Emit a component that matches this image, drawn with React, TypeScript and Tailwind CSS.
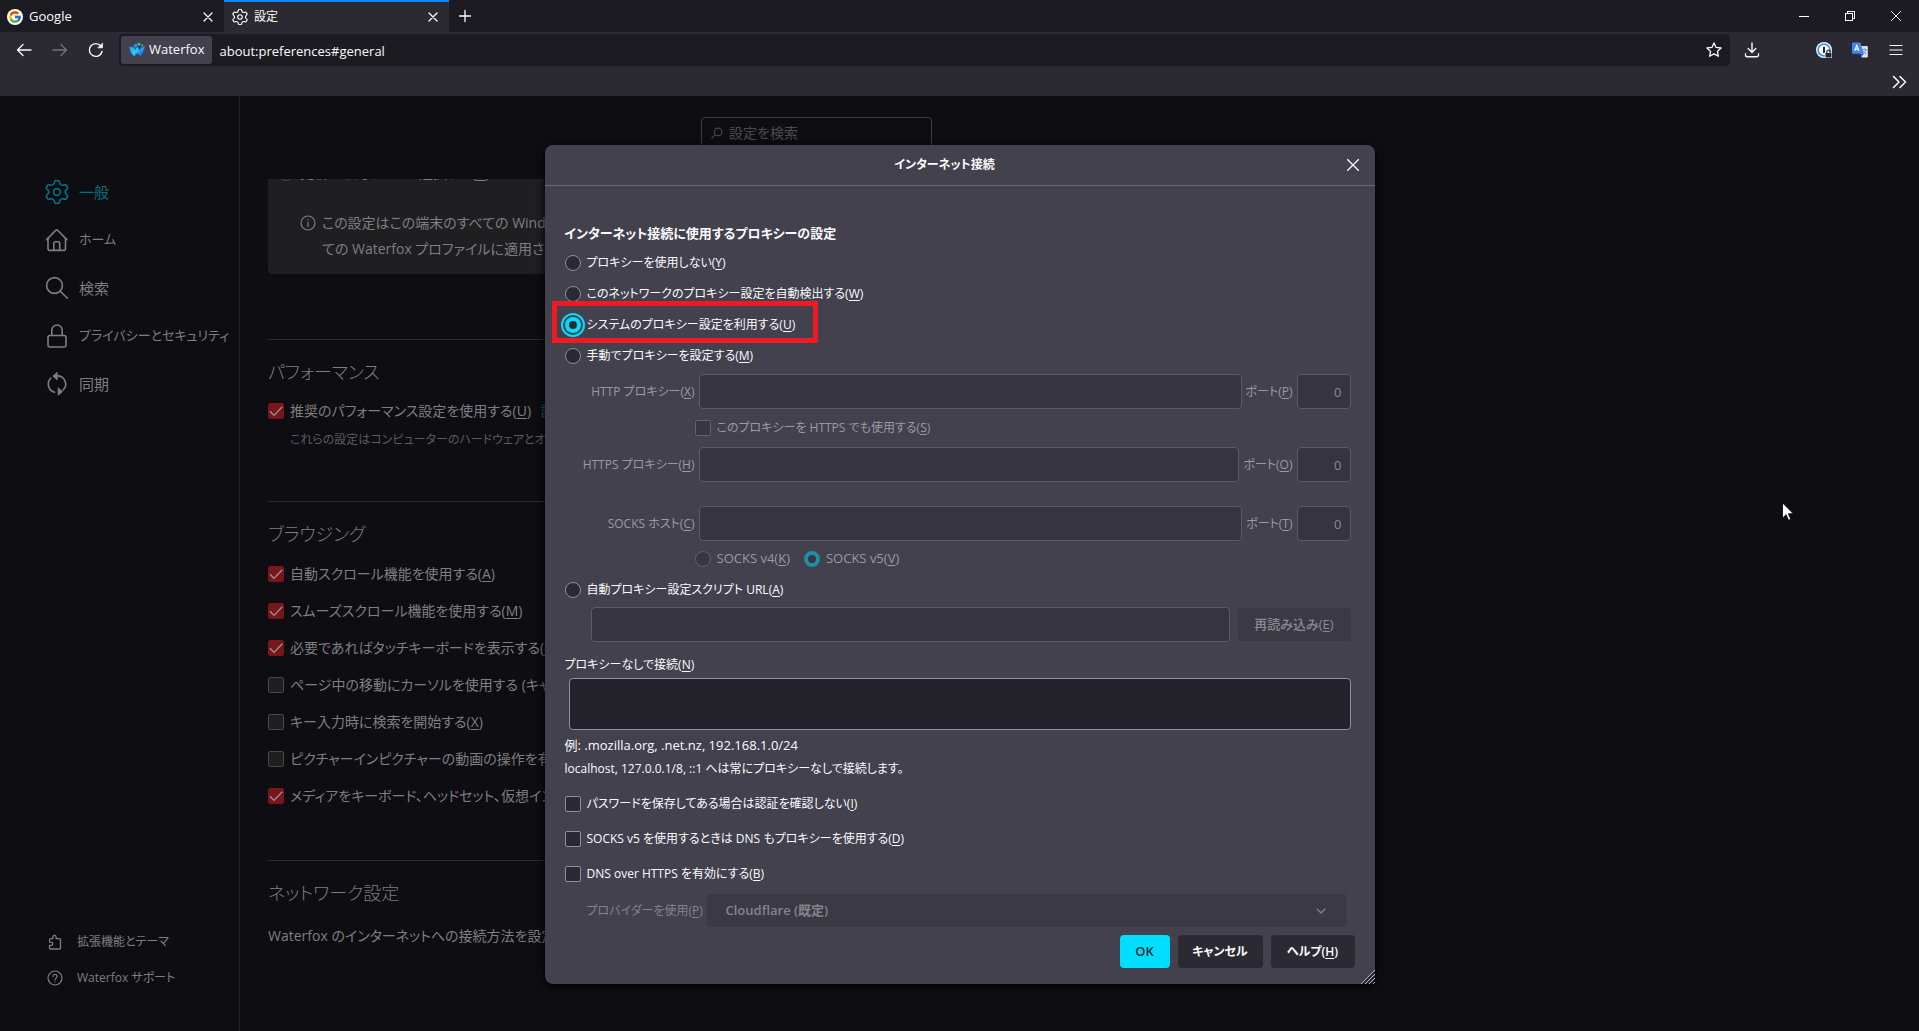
import React, { useState } from "react";
import { FcGoogle } from "react-icons/fc";

/* ---------- icons ---------- */

const polar = (r: number, deg: number) => {
  const a = (deg * Math.PI) / 180;
  return `${(12 + r * Math.cos(a)).toFixed(2)} ${(12 + r * Math.sin(a)).toFixed(2)}`;
};

const gearPath =
  Array.from({ length: 6 }, (_, k) => {
    const c = k * 60 - 90;
    return `${k === 0 ? "M" : "L"}${polar(9.4, c - 17)} Q${polar(12.9, c - 9)} ${polar(11.2, c)} Q${polar(12.9, c + 9)} ${polar(9.4, c + 17)} Q${polar(7.2, c + 30)} ${polar(9.4, c + 43)}`;
  }).join(" ") + "Z";

function Gear({ className = "", width = 1.8 }: { className?: string; width?: number }) {
  return (
    <svg viewBox="0 0 24 24" className={`shrink-0 ${className}`} fill="none" stroke="currentColor" strokeWidth={width} strokeLinejoin="round" aria-hidden="true">
      <path d={gearPath} />
      <circle cx="12" cy="12" r="3.4" />
    </svg>
  );
}

function Icon({ className = "", box = 24, width = 1.6, children }: { className?: string; box?: number; width?: number; children: React.ReactNode }) {
  return (
    <svg viewBox={`0 0 ${box} ${box}`} className={`shrink-0 ${className}`} fill="none" stroke="currentColor" strokeWidth={width} strokeLinecap="round" strokeLinejoin="round" aria-hidden="true">
      {children}
    </svg>
  );
}

const CloseIcon = ({ className = "size-4" }: { className?: string }) => (
  <Icon box={16} width={1.3} className={className}>
    <path d="M4 4l8 8M12 4l-8 8" />
  </Icon>
);

const HomeIcon = () => (
  <Icon className="size-6">
    <path d="M1.6 11.6 10.8 2.3a1.3 1.3 0 0 1 1.8 0l9.2 9.3" />
    <path d="M3 10.400v10a2 2 0 0 0 2 2h13.500a2 2 0 0 0 2-2v-10" />
    <path d="M8.800 22.400v-7.200a1.500 1.500 0 0 1 1.500-1.500h2.900a1.500 1.500 0 0 1 1.500 1.500v7.200" />
  </Icon>
);

const SearchIcon = () => (
  <Icon className="size-6">
    <circle cx="9.500" cy="9.500" r="7.900" />
    <path d="M15.200 15.200l7.200 7" />
  </Icon>
);

const LockIcon = () => (
  <Icon className="size-6">
    <rect x="3" y="11.500" width="18" height="11.500" rx="2" />
    <path d="M6.800 11.500V6.200a5.200 5.200 0 0 1 10.400 0v5.300" />
  </Icon>
);

const SyncIcon = () => (
  <Icon className="size-6">
    <path d="M9.500 20.200a8.300 8.300 0 0 1-3.600-14" />
    <path d="M13 3.900a8.200 8.200 0 0 1 5.200 14" />
    <path d="M12.200.8v7L8.200 4.300zM13.200 16.200v7l4-3.500z" fill="currentColor" strokeWidth="1" />
  </Icon>
);

const PuzzleIcon = () => (
  <Icon box={16} width={1.3} className="size-4">
    <path d="M2.500 6.800V5.600a1 1 0 0 1 1-1h2.400V2.900a1.600 1.600 0 0 1 3.200 0v1.700h3.400a1 1 0 0 1 1 1v8.400a1 1 0 0 1-1 1h-9a1 1 0 0 1-1-1v-2.600h1.700a1.600 1.600 0 0 0 0-3.200H2.500" />
  </Icon>
);

const HelpIcon = () => (
  <Icon box={16} width={1.2} className="size-4">
    <circle cx="8" cy="8" r="7" />
    <path d="M6 6.500a2 2 0 1 1 3 1.700c-.7.400-1 .7-1 1.500M8 11.800v.1" />
  </Icon>
);

const InfoIcon = () => (
  <Icon box={16} width={1.2} className="size-4">
    <circle cx="8" cy="8" r="7" />
    <path d="M8 7.200v4.300M8 4.600v.2" />
  </Icon>
);

const WaterfoxLogo = () => (
  <svg viewBox="0 0 16 16" className="size-4" aria-hidden="true">
    <defs>
      <linearGradient id="wf" x1="0" y1="0" x2="1" y2="0.600">
        <stop offset="0" stopColor="#2a8df0" />
        <stop offset="0.500" stopColor="#22d3fa" />
        <stop offset="1" stopColor="#2a55e8" />
      </linearGradient>
    </defs>
    <path d="M.2 4.400 4.600 5.600l1.700 2.600L8.200 4.600l2.200 3.600 1.800-2.400 3.600-1.600-1.400 5.800-2.800 4.600L8 11.200l-3 3.400L1.600 10z" fill="url(#wf)" />
    <path d="M3.600 3.800 7.600 1.600 8.400 4.200l-2.200 3z" fill="#1b7fd8" />
    <path d="M8.600 1h2.600v2.400H8.600zM6 2h1.600v1.400H6zM12.400 2.600h1.800v1.600h-1.800z" fill="#2fc4c8" />
  </svg>
);

const PasswordIcon = () => (
  <svg viewBox="0 0 16 16" className="size-4" aria-hidden="true">
    <circle cx="8" cy="8" r="8" fill="#f4f6f8" />
    <circle cx="8" cy="8" r="5.900" fill="#fff" stroke="#3d9af0" strokeWidth="1.800" />
    <rect x="7" y="4.800" width="2" height="6.200" rx=".6" fill="#23262b" />
    <path d="M8.800 10h7.200v6H8.800z" fill="#f4f6f8" />
    <rect x="9.500" y="11" width="6" height="4.500" rx=".6" fill="#23262b" />
    <path d="M10.800 11V9.700a1.700 1.700 0 0 1 3.400 0V11" fill="none" stroke="#23262b" strokeWidth="1.200" />
  </svg>
);

const TranslateIcon = () => (
  <svg viewBox="0 0 16 16" className="size-4" aria-hidden="true">
    <path d="M7.500 4H15a.8.8 0 0 1 .8.8v10a.8.8 0 0 1-.8.8H9.500z" fill="#dfe1e5" />
    <path d="M10.300 7.500h4.500M12.500 6.600v.9M14 7.500c-.3 2-1.600 3.500-3 4.500M11.200 8.800c.6 1.500 1.800 2.600 3 3.200" stroke="#5b8def" strokeWidth=".9" fill="none" />
    <path d="M.8.600h7.600l3.400 11.200H.8a.8.800 0 0 1-.8-.8V1.400A.8.800 0 0 1 .8.600z" fill="#4583ee" />
    <path d="M8 11.800h3.800L9 15.200z" fill="#2a56c6" />
    <path d="M2.600 8.900 4.800 3.400 7 8.900M3.400 7.200h2.900" stroke="#fff" strokeWidth="1.200" fill="none" />
  </svg>
);

/* ---------- small parts ---------- */

const Key = ({ children }: { children: string }) => (
  <>
    (<span className="underline underline-offset-2">{children}</span>)
  </>
);

function ToolButton({ label, children, className = "" }: { label: string; children: React.ReactNode; className?: string }) {
  return (
    <button type="button" aria-label={label} className={`grid h-8 w-9 place-items-center ${className}`}>
      {children}
    </button>
  );
}

function PageCheck({ id, checked = false, children }: { id: string; checked?: boolean; children: React.ReactNode }) {
  return (
    <div className="flex h-[37px] items-center gap-1.5 whitespace-nowrap text-sm">
      <span className="grid size-4 shrink-0 place-items-center">
        <input
          id={id}
          type="checkbox"
          defaultChecked={checked}
          className="peer col-start-1 row-start-1 size-4 appearance-none rounded-xs border border-[#49494b] bg-[#1f1f1f] checked:border-[#77171c] checked:bg-[#77171c]"
        />
        <svg viewBox="0 0 16 16" className="pointer-events-none invisible col-start-1 row-start-1 size-4 peer-checked:visible" fill="none" stroke="#9d9598" strokeWidth="1.300" aria-hidden="true">
          <path d="M2 8.200l4 4.200 8.300-8.600" />
        </svg>
      </span>
      <label htmlFor={id}>{children}</label>
    </div>
  );
}

function DialogCheck({ id, disabled = false, children }: { id: string; disabled?: boolean; children: React.ReactNode }) {
  return (
    <div className="flex items-center gap-1.5">
      <input
        id={id}
        type="checkbox"
        disabled={disabled}
        className="size-4 shrink-0 appearance-none rounded-xs border border-[#8f8f9d] bg-[#2b2a33] checked:bg-[#00ddff] disabled:border-[#62616c] disabled:bg-[#383641]"
      />
      <label htmlFor={id} className={disabled ? "text-[#9b9aa2]" : ""}>
        {children}
      </label>
    </div>
  );
}

function Radio({ id, name, checked, onSelect, children }: { id: string; name: string; checked: boolean; onSelect: () => void; children: React.ReactNode }) {
  return (
    <div className="flex h-[31px] items-center gap-1.5">
      <input
        id={id}
        name={name}
        type="radio"
        checked={checked}
        onChange={onSelect}
        className="size-4 shrink-0 appearance-none rounded-full border border-[#8f8f9d] bg-[#2b2a33] checked:border-4 checked:border-[#00ddff] checked:outline-2 checked:outline-offset-2 checked:outline-[#00ddff]"
      />
      <label htmlFor={id}>{children}</label>
    </div>
  );
}

function SocksRadio({ id, checked = false, children }: { id: string; checked?: boolean; children: React.ReactNode }) {
  return (
    <div className="flex items-center gap-1.5">
      <input
        id={id}
        name="socks-version"
        type="radio"
        defaultChecked={checked}
        disabled
        className="size-4 appearance-none rounded-full border border-[#5f5e6a] bg-[#383641] checked:border-4 checked:border-[#218ea6]"
      />
      <label htmlFor={id}>{children}</label>
    </div>
  );
}

const fieldClass = "h-[35px] rounded border border-[#5b5a66] bg-[#36343f] px-2 text-[13px] text-[#8b8a93]";

function ProxyRow({ id, label, hotkey, portKey }: { id: string; label: string; hotkey: string; portKey: string }) {
  return (
    <div className="flex items-center gap-1 pr-1 whitespace-nowrap text-[#9b9aa2]">
      <label htmlFor={id} className="w-[130px] text-right">
        {label}
        <Key>{hotkey}</Key>
      </label>
      <input id={id} type="text" disabled className={`min-w-0 flex-1 ${fieldClass}`} />
      <label htmlFor={`${id}-port`}>
        ポート<Key>{portKey}</Key>
      </label>
      <input id={`${id}-port`} type="text" disabled defaultValue="0" className={`w-[54px] text-right ${fieldClass}`} />
    </div>
  );
}

/* ---------- browser chrome ---------- */

function BrowserChrome() {
  return (
    <header className="shrink-0 bg-[#2b2a33] text-[13px] text-[#fbfbfe]">
      <div className="flex h-8 bg-[#1c1b22]">
        <div className="flex w-56 items-center gap-1.5 border-t-2 border-transparent pr-2 pl-[7px]">
          <span className="grid size-4 place-items-center rounded-full bg-white">
            <FcGoogle className="size-3.5" />
          </span>
          <span className="flex-1">Google</span>
          <button type="button" aria-label="Google タブを閉じる">
            <CloseIcon />
          </button>
        </div>
        <div className="flex w-[225px] items-center gap-1.5 border-t-2 border-[#0a84ff] bg-[#2b2a33] px-2">
          <Gear className="size-4" width={1.7} />
          <span className="flex-1 text-xs">設定</span>
          <button type="button" aria-label="設定タブを閉じる">
            <CloseIcon />
          </button>
        </div>
        <button type="button" aria-label="新しいタブ" className="grid w-8 place-items-center">
          <Icon box={16} width={1.3} className="size-4">
            <path d="M8 2.500v11M2.500 8h11" />
          </Icon>
        </button>
        <div className="ml-auto flex">
          <button type="button" aria-label="最小化" className="grid w-[46px] place-items-center">
            <span className="h-px w-2.5 bg-white" />
          </button>
          <button type="button" aria-label="元に戻す" className="grid w-[46px] place-items-center">
            <svg viewBox="0 0 10 10" className="size-2.5" fill="none" stroke="currentColor" shapeRendering="crispEdges" aria-hidden="true">
              <path d="M.5 2.500h7v7h-7zM2.500 2V.5h7v7H8" />
            </svg>
          </button>
          <button type="button" aria-label="閉じる" className="grid w-[46px] place-items-center">
            <svg viewBox="0 0 10 10" className="size-2.5" stroke="currentColor" strokeWidth="1" aria-hidden="true">
              <path d="M0 0l10 10M10 0L0 10" />
            </svg>
          </button>
        </div>
      </div>

      <div className="flex items-center pt-0.5 pr-[5px] pl-1.5">
        <ToolButton label="戻る">
          <Icon box={16} width={1.3} className="size-4">
            <path d="M15 8H1.500M7 2.500 1.500 8 7 13.500" />
          </Icon>
        </ToolButton>
        <ToolButton label="進む" className="text-[#74737b]">
          <Icon box={16} width={1.3} className="size-4">
            <path d="M1 8h13.500M9 2.500 14.500 8 9 13.500" />
          </Icon>
        </ToolButton>
        <ToolButton label="再読み込み">
          <Icon box={16} width={1.4} className="size-4">
            <path d="M14 9.500A6.400 6.400 0 1 1 12.800 4" />
            <path d="M14.500 1.500v4.300h-4.300z" fill="currentColor" strokeWidth=".8" />
          </Icon>
        </ToolButton>
        <div className="ml-[5px] flex h-8 flex-1 items-center rounded bg-[#1c1b22] pl-0.5">
          <button type="button" className="flex h-7 items-center gap-1 rounded-[3px] bg-[#42414d] px-2">
            <WaterfoxLogo />
            Waterfox
          </button>
          <input aria-label="アドレス" defaultValue="about:preferences#general" className="ml-[7px] h-7 min-w-0 flex-1 bg-transparent pt-0.5 outline-none" />
          <button type="button" aria-label="ブックマークに追加" className="mr-2">
            <Icon box={16} width={1.3} className="size-4">
              <path d="M8 .9l2.100 4.500 5 .6-3.700 3.400 1 4.900L8 11.900l-4.400 2.400 1-4.900L.9 6l5-.6z" />
            </Icon>
          </button>
        </div>
        <ToolButton label="ダウンロード" className="ml-1">
          <Icon box={16} width={1.4} className="size-4">
            <path d="M8 1v9M4.200 6.600 8 10.400l3.800-3.800M1.500 11.800v1.200a1.800 1.800 0 0 0 1.800 1.800h9.400a1.800 1.800 0 0 0 1.800-1.800v-1.200" />
          </Icon>
        </ToolButton>
        <ToolButton label="パスワード管理" className="ml-9">
          <PasswordIcon />
        </ToolButton>
        <ToolButton label="翻訳">
          <TranslateIcon />
        </ToolButton>
        <ToolButton label="メニュー">
          <Icon box={16} width={1.2} className="size-4">
            <path d="M2 3.500h12M2 8h12M2 12.500h12" />
          </Icon>
        </ToolButton>
      </div>

      <div className="flex h-[30px] items-center justify-end pt-0.5 pr-3">
        <button type="button" aria-label="ブックマークをさらに表示">
          <Icon box={16} width={1.5} className="size-4">
            <path d="M2.500 2.500 8 8l-5.500 5.500M9 2.500 14.500 8 9 13.500" />
          </Icon>
        </button>
      </div>
    </header>
  );
}

/* ---------- settings page ---------- */

const categories = [
  { label: "一般", icon: <Gear className="size-6" width={1.6} />, style: "text-[15px] text-[#00727f]" },
  { label: "ホーム", icon: <HomeIcon />, style: "text-[13px]" },
  { label: "検索", icon: <SearchIcon />, style: "text-[15px]" },
  { label: "プライバシーとセキュリティ", icon: <LockIcon />, style: "text-[13px]" },
  { label: "同期", icon: <SyncIcon />, style: "text-[15px]" },
];

function Sidebar() {
  return (
    <nav className="flex w-60 shrink-0 flex-col justify-between border-r border-[#242427] pt-[72px] pb-[35px] pl-[45px] whitespace-nowrap">
      <ul>
        {categories.map((c) => (
          <li key={c.label}>
            <a href="#" className={`flex h-12 items-center gap-2.5 ${c.style}`}>
              {c.icon}
              {c.label}
            </a>
          </li>
        ))}
      </ul>
      <ul className="pl-0.5 text-xs">
        <li>
          <a href="#" className="flex h-9 items-center gap-3.5">
            <PuzzleIcon />
            拡張機能とテーマ
          </a>
        </li>
        <li>
          <a href="#" className="flex h-9 items-center gap-3.5">
            <HelpIcon />
            Waterfox サポート
          </a>
        </li>
      </ul>
    </nav>
  );
}

const browsing = [
  { text: "自動スクロール機能を使用する", hotkey: "A", checked: true },
  { text: "スムーズスクロール機能を使用する", hotkey: "M", checked: true },
  { text: "必要であればタッチキーボードを表示する", hotkey: "C", checked: true },
  { text: "ページ中の移動にカーソルを使用する (キャレット)", hotkey: "B", checked: false },
  { text: "キー入力時に検索を開始する", hotkey: "X", checked: false },
  { text: "ピクチャーインピクチャーの動画の操作を有効にする", hotkey: "E", checked: false },
  { text: "メディアをキーボード、ヘッドセット、仮想インターフェイスで操作する", hotkey: "V", checked: true },
];

const headingClass = "h-8 text-lg leading-8 font-light";

function Preferences() {
  return (
    <main className="ml-7 flex w-[664px] flex-col">
      <div className="flex h-[83px] shrink-0 justify-end pt-[21px]">
        <div className="flex h-8 w-[231px] items-center gap-1.5 rounded border border-[#3d3d41] px-[9px] text-[#4b4b4e]">
          <Icon box={16} width={1.4} className="size-3">
            <circle cx="9.500" cy="6.500" r="5" />
            <path d="M5.800 10.200 1 15" />
          </Icon>
          <input aria-label="設定を検索" placeholder="設定を検索" className="w-full bg-transparent text-sm outline-none placeholder:text-[#4b4b4e]" />
        </div>
      </div>

      <div className="min-h-0 flex-1 overflow-hidden">
        <section className="h-[95px] overflow-hidden rounded-b bg-[#1f1f21] text-sm">
          <div className="-mt-[17px] flex h-[22px] items-center gap-1.5 pl-2.5">
            <input id="update-ask" type="radio" className="size-4 appearance-none rounded-full border border-[#49494b]" />
            <label htmlFor="update-ask">
              更新を確認してから選択する<Key>C</Key>
            </label>
          </div>
          <div className="mt-[26px] flex gap-1.5 pl-8 leading-[26px]">
            <span className="flex h-[26px] items-center">
              <InfoIcon />
            </span>
            <p className="whitespace-nowrap">
              この設定はこの端末のすべての Windows アカウントと、
              <br />
              ての Waterfox プロファイルに適用されます。
            </p>
          </div>
        </section>

        <section className="mt-[65px] border-t border-[#2a2a2d] pt-4">
          <h2 className={headingClass}>パフォーマンス</h2>
          <div className="mt-1 flex items-center gap-2.5 whitespace-nowrap">
            <PageCheck id="performance" checked>
              推奨のパフォーマンス設定を使用する<Key>U</Key>
            </PageCheck>
            <a href="#" className="text-sm text-[#00727f]">
              詳細情報
            </a>
          </div>
          <p className="h-[22px] pl-[22px] text-xs leading-[22px] whitespace-nowrap text-[#5c5b60]">
            これらの設定はコンピューターのハードウェアとオペレーティングシステムに最適化されます。
          </p>
        </section>

        <section className="mt-[50px] border-t border-[#2a2a2d] pt-4">
          <h2 className={headingClass}>ブラウジング</h2>
          <div className="mt-[5px]">
            {browsing.map((b) => (
              <PageCheck key={b.hotkey} id={`browse-${b.hotkey}`} checked={b.checked}>
                {b.text}
                <Key>{b.hotkey}</Key>
              </PageCheck>
            ))}
          </div>
        </section>

        <section className="mt-[46px] border-t border-[#2a2a2d] pt-4">
          <h2 className={headingClass}>ネットワーク設定</h2>
          <p className="mt-3.5 text-sm leading-[26px]">Waterfox のインターネットへの接続方法を設定します。</p>
        </section>
      </div>
    </main>
  );
}

/* ---------- connection dialog ---------- */

function ConnectionDialog() {
  const [mode, setMode] = useState("system");
  const radio = (value: string, text: string, hotkey: string) => (
    <Radio id={`proxy-${value}`} name="proxy-mode" checked={mode === value} onSelect={() => setMode(value)}>
      {text}
      <Key>{hotkey}</Key>
    </Radio>
  );

  return (
    <div role="dialog" aria-labelledby="dialog-title" className="relative w-[830px] rounded-lg bg-[#42414d] text-xs text-[#fbfbfe] shadow-[0_2px_8px_#000]">
      <div className="flex h-[41px] items-center border-b border-[#686773] pr-3.5">
        <h1 id="dialog-title" className="flex-1 text-center font-bold">
          インターネット接続
        </h1>
        <button type="button" aria-label="閉じる" className="grid w-4 place-items-center">
          <svg viewBox="0 0 12 12" className="size-3" stroke="currentColor" strokeWidth="1.300" aria-hidden="true">
            <path d="M0 0l12 12M12 0L0 12" />
          </svg>
        </button>
      </div>

      <form className="px-5 pt-[35px] pb-4" onSubmit={(e) => e.preventDefault()}>
        <h2 className="h-[26px] text-[13px] leading-6 font-bold">インターネット接続に使用するプロキシーの設定</h2>
        {radio("none", "プロキシーを使用しない", "Y")}
        {radio("detect", "このネットワークのプロキシー設定を自動検出する", "W")}
        <div className="relative">
          {radio("system", "システムのプロキシー設定を利用する", "U")}
          <div className="pointer-events-none absolute -top-2 -left-[13px] h-[42px] w-[266px] border-[5px] border-[#ed1c24]" />
        </div>
        {radio("manual", "手動でプロキシーを設定する", "M")}

        <div className="mt-[3px]">
          <ProxyRow id="http" label="HTTP プロキシー" hotkey="X" portKey="P" />
          <div className="flex h-[38px] items-center pl-[130px]">
            <DialogCheck id="share" disabled>
              このプロキシーを HTTPS でも使用する<Key>S</Key>
            </DialogCheck>
          </div>
          <ProxyRow id="https" label="HTTPS プロキシー" hotkey="H" portKey="O" />
          <div className="mt-6">
            <ProxyRow id="socks" label="SOCKS ホスト" hotkey="C" portKey="T" />
          </div>
          <div className="flex h-9 items-center gap-3.5 pl-[130px] text-[13px] text-[#9b9aa2]">
            <SocksRadio id="socks4">
              SOCKS v4<Key>K</Key>
            </SocksRadio>
            <SocksRadio id="socks5" checked>
              SOCKS v5<Key>V</Key>
            </SocksRadio>
          </div>
        </div>

        <div className="-mt-[3px] mb-0.5">{radio("auto", "自動プロキシー設定スクリプト URL", "A")}</div>
        <div className="flex items-center gap-2 pr-1 pl-[26px]">
          <input aria-label="自動プロキシー設定スクリプト URL" type="text" disabled className={`min-w-0 flex-1 ${fieldClass}`} />
          <button type="button" disabled className="h-[33px] w-[113px] rounded bg-[#3b3944] text-[13px] font-medium text-[#8b8a93]">
            再読み込み<Key>E</Key>
          </button>
        </div>

        <label htmlFor="no-proxy" className="block h-9 pt-3 leading-[22px]">
          プロキシーなしで接続<Key>N</Key>
        </label>
        <div className="flex pr-1 pl-1">
          <textarea id="no-proxy" className="h-[52px] w-full resize-none rounded border border-[#8f8f9d] bg-[#23222b] p-2" />
        </div>
        <div className="mt-[3px] leading-6">
          <p className="text-[13px] leading-6">例: .mozilla.org, .net.nz, 192.168.1.0/24</p>
          <p>localhost, 127.0.0.1/8, ::1 へは常にプロキシーなしで接続します。</p>
        </div>

        <div className="mt-[5px] grid auto-rows-[35px] items-center">
          <DialogCheck id="no-prompt">
            パスワードを保存してある場合は認証を確認しない<Key>I</Key>
          </DialogCheck>
          <DialogCheck id="socks-dns">
            SOCKS v5 を使用するときは DNS もプロキシーを使用する<Key>D</Key>
          </DialogCheck>
          <DialogCheck id="doh">
            DNS over HTTPS を有効にする<Key>B</Key>
          </DialogCheck>
        </div>

        <div className="mt-[3px] flex items-center pr-2 pl-[22px] text-[#85848d]">
          <label htmlFor="provider" className="w-[120px] whitespace-nowrap">
            プロバイダーを使用<Key>P</Key>
          </label>
          <div className="grid flex-1">
            <select
              id="provider"
              disabled
              className="col-start-1 row-start-1 h-[33px] appearance-none rounded bg-[#3b3944] px-[19px] text-[13px] font-semibold text-[#85848d] opacity-100"
            >
              <option>Cloudflare (既定)</option>
            </select>
            <Icon box={10} width={1.2} className="pointer-events-none col-start-1 row-start-1 mr-[21px] size-2.5 self-center justify-self-end">
              <path d="M1 3l4 4 4-4" />
            </Icon>
          </div>
        </div>

        <div className="mt-2 flex justify-end gap-2 font-semibold">
          <button type="submit" className="h-[33px] w-[50px] rounded bg-[#00ddff] text-[13px] text-[#2b2a33]">
            OK
          </button>
          <button type="button" className="h-[33px] w-[85px] rounded bg-[#2b2a33]">
            キャンセル
          </button>
          <button type="button" className="h-[33px] w-[84px] rounded bg-[#2b2a33]">
            ヘルプ<Key>H</Key>
          </button>
        </div>
      </form>

      <svg viewBox="0 0 15 15" className="absolute right-0 bottom-0 size-[15px]" aria-hidden="true">
        <path d="M1 15 15 1M5 15 15 5M9 15l6-6M13 15l2-2" stroke="#b4b3bd" strokeWidth="1" />
        <path d="M3 15 15 3M7 15l8-8M11 15l4-4" stroke="#1c1b22" strokeWidth="1.200" />
      </svg>
    </div>
  );
}

export default function App() {
  return (
    <div className="relative flex h-screen flex-col overflow-hidden bg-[#0e0d12] font-['Open_Sans','Noto_Sans_CJK_JP',sans-serif] [font-feature-settings:'palt']" lang="ja">
      <BrowserChrome />
      <div className="relative flex min-h-0 flex-1 text-[#7f7e82]">
        <Sidebar />
        <Preferences />
        <div className="absolute inset-0 flex items-start justify-center pt-[49px]">
          <ConnectionDialog />
        </div>
      </div>
      <svg viewBox="0 0 12 19" className="pointer-events-none absolute top-[502px] right-[125px] h-[19px] w-3" aria-hidden="true">
        <path d="M.5.8v15.400l3.600-3.500 2.400 5.500 2.300-1-2.400-5.400h5z" fill="#fff" stroke="#000" strokeWidth=".8" />
      </svg>
    </div>
  );
}
